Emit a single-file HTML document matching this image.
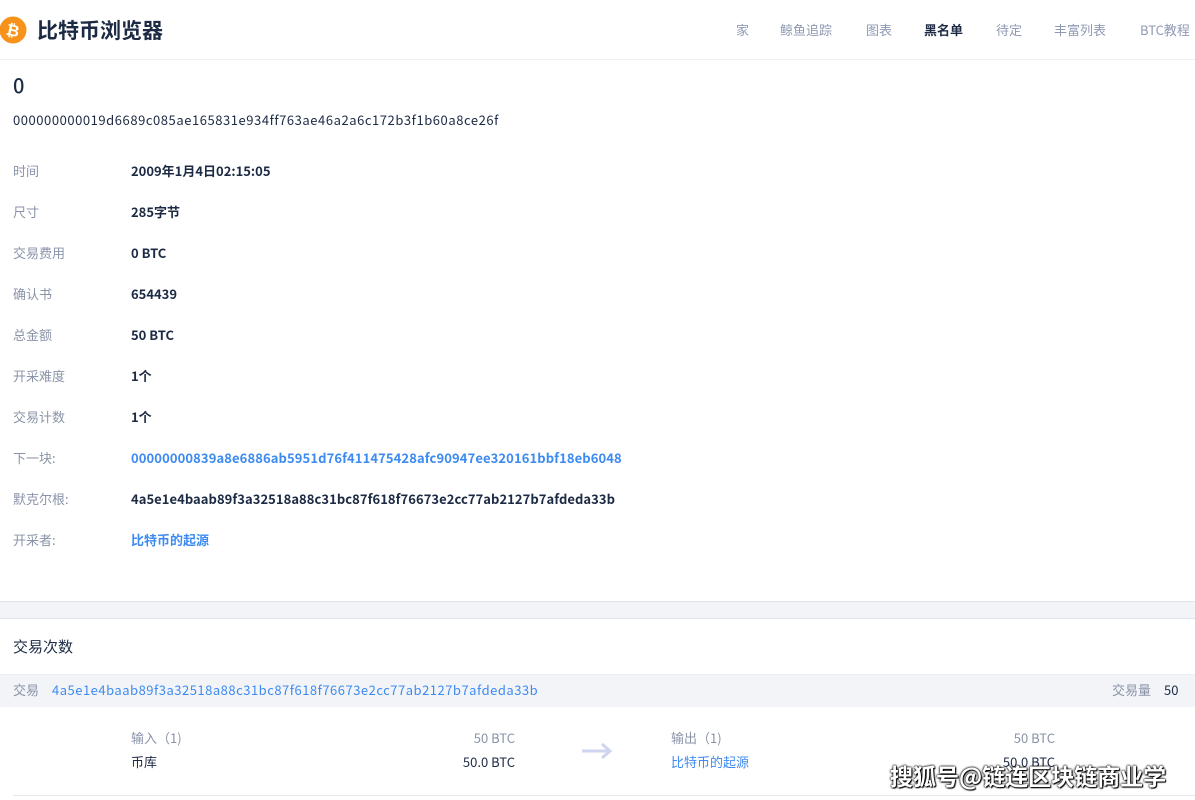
<!DOCTYPE html>
<html><head><meta charset="utf-8"><style>
*{margin:0;padding:0;box-sizing:border-box}
body{width:1195px;height:800px;overflow:hidden;background:#fff;font-family:"Noto Sans CJK SC","Liberation Sans",sans-serif;color:#1c2a44;position:relative}
.a{position:absolute;white-space:nowrap;line-height:18px}
.lbl{font-size:13px;color:#8a93a8;left:13px}
.val{font-size:13px;font-weight:bold;color:#1c2a44;left:131px}
.nav{font-size:13px;color:#8f99b3;top:21px}
</style></head><body>
<svg class="a" style="left:-1px;top:16px" width="28" height="28" viewBox="0 0 28 28"><circle cx="14" cy="14" r="13.5" fill="#f7931a"/><text x="14" y="20" font-family="Liberation Sans" font-weight="bold" font-size="16" fill="#fff" text-anchor="middle" transform="rotate(12 14 14)">₿</text></svg>
<div class="a" style="left:37px;top:16px;font-size:21px;line-height:28px;font-weight:bold;color:#1c2a44">比特币浏览器</div>
<div class="a nav" style="left:736px">家</div>
<div class="a nav" style="left:780px">鲸鱼追踪</div>
<div class="a nav" style="left:866px">图表</div>
<div class="a nav" style="left:924px;color:#1c2a44;font-weight:bold">黑名单</div>
<div class="a nav" style="left:996px">待定</div>
<div class="a nav" style="left:1054px">丰富列表</div>
<div class="a nav" style="left:1140px">BTC教程</div>
<div class="a" style="left:0;top:59px;width:1195px;height:1px;background:#eef0f4"></div>
<div class="a" style="left:13px;top:72px;font-size:20px;line-height:26px;font-weight:500">0</div>
<div class="a" style="left:13px;top:111px;font-size:13px;color:#1c2a44;letter-spacing:0.55px">000000000019d6689c085ae165831e934ff763ae46a2a6c172b3f1b60a8ce26f</div>
<div class="a lbl" style="top:162px">时间</div><div class="a val" style="top:162px">2009年1月4日02:15:05</div>
<div class="a lbl" style="top:203px">尺寸</div><div class="a val" style="top:203px">285字节</div>
<div class="a lbl" style="top:244px">交易费用</div><div class="a val" style="top:244px">0 BTC</div>
<div class="a lbl" style="top:285px">确认书</div><div class="a val" style="top:285px">654439</div>
<div class="a lbl" style="top:326px">总金额</div><div class="a val" style="top:326px">50 BTC</div>
<div class="a lbl" style="top:367px">开采难度</div><div class="a val" style="top:367px">1个</div>
<div class="a lbl" style="top:408px">交易计数</div><div class="a val" style="top:408px">1个</div>
<div class="a lbl" style="top:449px">下一块:</div><div class="a val" style="top:449px;color:#3d8bf2;letter-spacing:0.1px">00000000839a8e6886ab5951d76f411475428afc90947ee320161bbf18eb6048</div>
<div class="a lbl" style="top:490px">默克尔根:</div><div class="a val" style="top:490px;letter-spacing:0.05px">4a5e1e4baab89f3a32518a88c31bc87f618f76673e2cc77ab2127b7afdeda33b</div>
<div class="a lbl" style="top:531px">开采者:</div><div class="a val" style="top:531px;color:#3d8bf2">比特币的起源</div>
<div class="a" style="left:0;top:601px;width:1195px;height:18px;background:#f3f4f8;border-top:1px solid #dfe2ea;border-bottom:1px solid #dfe2ea"></div>
<div class="a" style="left:13px;top:636px;font-size:15px;line-height:22px;color:#1c2a44">交易次数</div>
<div class="a" style="left:0;top:674px;width:1195px;height:33px;background:#f3f4f8;border-top:1px solid #eceef3"></div>
<div class="a" style="left:13px;top:681px;font-size:13px;color:#8a93a8">交易</div>
<div class="a" style="left:52px;top:681px;font-size:13px;color:#3d8bf2;letter-spacing:0.5px">4a5e1e4baab89f3a32518a88c31bc87f618f76673e2cc77ab2127b7afdeda33b</div>
<div class="a" style="left:1112px;top:681px;font-size:13px;color:#8a93a8">交易量</div>
<div class="a" style="left:1164px;top:681px;font-size:13px;color:#1c2a44">50</div>
<div class="a" style="left:131px;top:729px;font-size:13px;color:#8a93a8">输入（1)</div>
<div class="a" style="left:415px;width:100px;text-align:right;top:729px;font-size:13px;color:#8a93a8">50 BTC</div>
<div class="a" style="left:131px;top:753px;font-size:13px;color:#1c2a44">币库</div>
<div class="a" style="left:415px;width:100px;text-align:right;top:753px;font-size:13px;color:#1c2a44">50.0 BTC</div>
<svg class="a" style="left:581px;top:741px" width="32" height="20" viewBox="0 0 32 20"><path d="M1 10H29M21 3L29 10L21 17" stroke="#cfd5ee" stroke-width="3" fill="none"/></svg>
<div class="a" style="left:671px;top:729px;font-size:13px;color:#8a93a8">输出（1)</div>
<div class="a" style="left:955px;width:100px;text-align:right;top:729px;font-size:13px;color:#8a93a8">50 BTC</div>
<div class="a" style="left:671px;top:753px;font-size:13px;color:#3d8bf2">比特币的起源</div>
<div class="a" style="left:955px;width:100px;text-align:right;top:753px;font-size:13px;color:#1c2a44">50.0 BTC</div>
<div class="a" style="left:13px;top:795px;width:1182px;height:1px;background:#e6e8ee"></div>
<div class="a" style="left:890px;top:760px;font-size:23px;line-height:30px;font-weight:bold;color:#fff;text-shadow:0 0 2px #000,0 0 2px #000,1px 1px 1px #000">搜狐号@链连区块链商业学</div>
</body></html>
